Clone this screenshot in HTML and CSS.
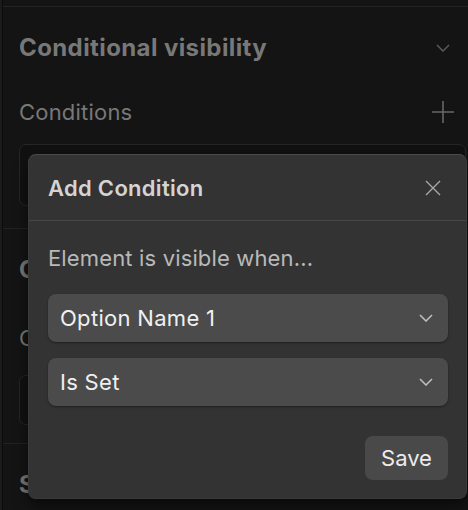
FILE: index.html
```html
<!DOCTYPE html>
<html lang="en">
<head>
<meta charset="utf-8">
<title>Conditional visibility</title>
<link rel="stylesheet" href="styles.css">
</head>
<body>
<div class="app">
  <div class="rail"></div>
  <div class="panel">
    <div class="topbar"></div>

    <section class="section s1">
      <div class="sec-head">
        <h2 class="sec-title">Conditional visibility</h2>
        <svg class="sec-chev" width="14" height="8" viewBox="0 0 14 8"><path d="M1 1l6 6 6-6" fill="none" stroke="#5e5e5e" stroke-width="1.4"/></svg>
      </div>
      <div class="row">
        <span class="label">Conditions</span>
        <svg class="plus" width="22" height="22" viewBox="0 0 22 22"><path d="M11 0v22M0 11h22" fill="none" stroke="#666" stroke-width="1.6"/></svg>
      </div>
      <div class="box box-lg"></div>
    </section>

    <section class="section s2">
      <div class="sec-head">
        <h2 class="sec-title">Custom</h2>
      </div>
      <div class="row r2">
        <span class="label">Class</span>
      </div>
      <div class="box box-sm"></div>
    </section>

    <section class="section s3">
      <div class="sec-head">
        <h2 class="sec-title">Settings</h2>
      </div>
    </section>
  </div>

  <div class="modal">
    <div class="modal-head">
      <h3 class="modal-title">Add Condition</h3>
      <svg class="close" width="16" height="16" viewBox="0 0 16 16"><path d="M1 1l14 14M15 1L1 15" fill="none" stroke="#a8a8a8" stroke-width="1.4"/></svg>
    </div>
    <div class="modal-body">
      <p class="hint">Element is visible when...</p>
      <div class="select">
        <span>Option Name 1</span>
        <svg width="14" height="8" viewBox="0 0 14 8"><path d="M1 1l6 6 6-6" fill="none" stroke="#bdbdbd" stroke-width="1.6"/></svg>
      </div>
      <div class="select">
        <span>Is Set</span>
        <svg width="14" height="8" viewBox="0 0 14 8"><path d="M1 1l6 6 6-6" fill="none" stroke="#bdbdbd" stroke-width="1.6"/></svg>
      </div>
      <div class="actions">
        <button class="save" type="button">Save</button>
      </div>
    </div>
  </div>
</div>
</body>
</html>
```

FILE: styles.css
```css
* { box-sizing: border-box; }
html, body { margin: 0; padding: 0; }
body {
  background: #141414;
  font-family: Inter, "Noto Sans", "Liberation Sans", sans-serif;
  width: 468px;
  height: 510px;
  overflow: hidden;
}
.app {
  position: relative;
  display: flex;
  height: 510px;
}
.rail {
  width: 3px;
  background: #1b1b1b;
  border-right: 1px solid #0c0c0c;
  flex: none;
}
.panel {
  flex: 1;
  display: flex;
  flex-direction: column;
}
.topbar {
  height: 7px;
  border-bottom: 1px solid #232323;
}
.section {
  padding: 27px 2px 0 16px;
  border-bottom: 1px solid #222;
}
.s1 { padding-bottom: 22px; }
.s2 { padding-bottom: 18px; }
.s3 { border-bottom: none; }
.sec-head {
  display: flex;
  align-items: center;
  justify-content: space-between;
  height: 28px;
  padding-right: 16px;
}
.sec-title {
  margin: 0;
  font-size: 24px;
  font-weight: 700;
  letter-spacing: 0.4px;
  color: #787878;
  line-height: 28px;
  white-space: nowrap;
}
.row {
  display: flex;
  align-items: center;
  justify-content: space-between;
  height: 24px;
  margin-top: 38px;
  padding-right: 12px;
}
.r2 { margin-top: 42px; }
.label {
  font-size: 22px;
  letter-spacing: 0.2px;
  color: #787878;
  line-height: 24px;
  white-space: nowrap;
}
.box {
  border: 1px solid #262626;
  border-radius: 7px;
  background: #111;
}
.box-lg { height: 62px; margin-top: 20px; }
.box-sm { height: 50px; margin-top: 25px; }

.modal {
  position: absolute;
  left: 28px;
  top: 154px;
  width: 439px;
  height: 345px;
  background: #333;
  border-radius: 8px;
  border: 1px solid #3a3a3a;
  border-top-color: #4a4a4a;
  box-shadow: 0 6px 14px rgba(0, 0, 0, 0.55);
  display: flex;
  flex-direction: column;
}
.modal-head {
  height: 66px;
  flex: none;
  display: flex;
  align-items: center;
  justify-content: space-between;
  padding: 0 25px 0 19px;
  border-bottom: 1px solid #484848;
}
.modal-title {
  margin: 0;
  font-size: 22px;
  font-weight: 600;
  letter-spacing: 0.3px;
  color: #d4d4d4;
}
.modal-body {
  padding: 25px 18px 0 19px;
  display: flex;
  flex-direction: column;
}
.hint {
  margin: 0 0 24px;
  font-size: 22px;
  letter-spacing: 0.15px;
  line-height: 24px;
  color: #b9b9b9;
}
.select {
  height: 48px;
  border-radius: 8px;
  background: #4b4b4b;
  box-shadow: 0 1px 2px rgba(0, 0, 0, 0.45);
  display: flex;
  align-items: center;
  justify-content: space-between;
  padding: 0 15px 0 12px;
  font-size: 22px;
  letter-spacing: 0.3px;
  color: #f0f0f0;
  margin-bottom: 16px;
}
.actions {
  display: flex;
  justify-content: flex-end;
  margin-top: 14px;
}
.save {
  width: 83px;
  height: 44px;
  border: none;
  border-radius: 8px;
  background: #494949;
  color: #ececec;
  font-family: inherit;
  font-size: 22px;
  padding: 0;
}
```
